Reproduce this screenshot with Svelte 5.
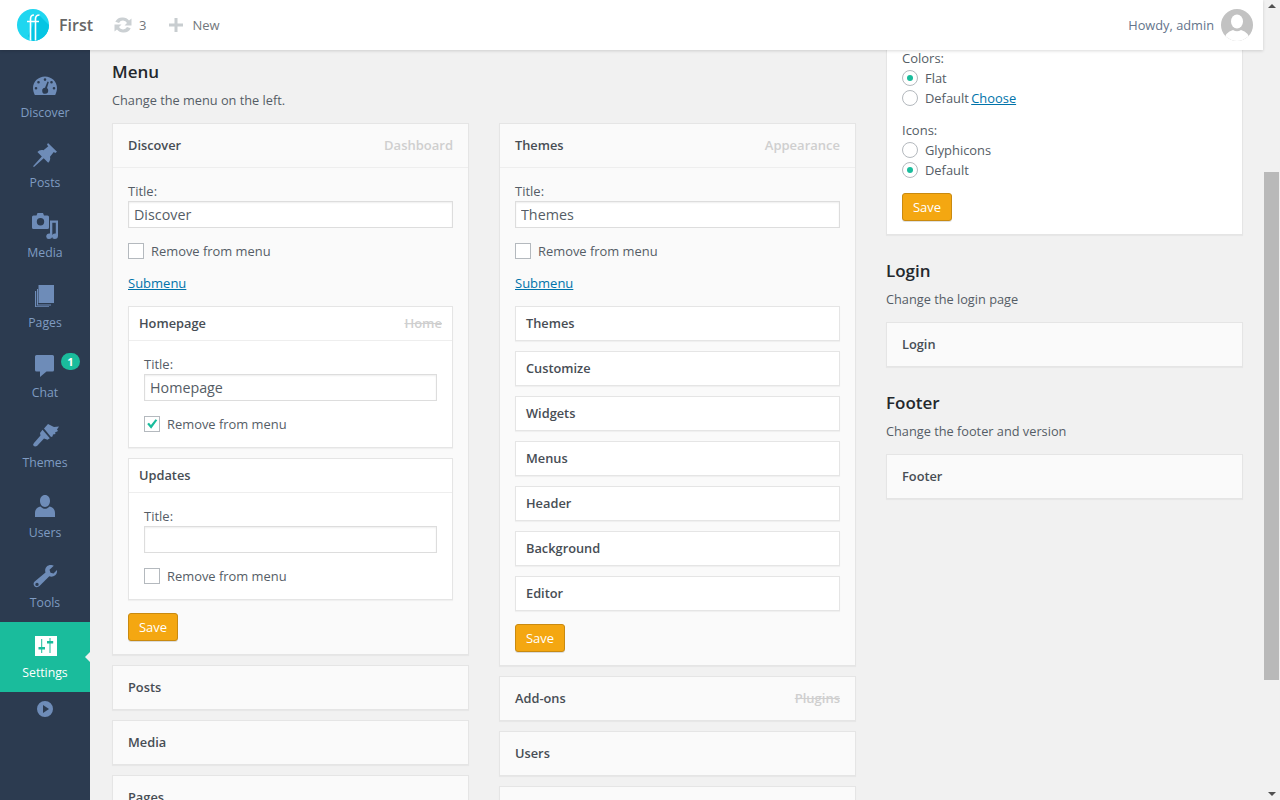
<script lang="ts">
  const nav = [
    { label: 'Discover', icon: 'gauge' },
    { label: 'Posts', icon: 'pin' },
    { label: 'Media', icon: 'media' },
    { label: 'Pages', icon: 'pages' },
    { label: 'Chat', icon: 'chat', badge: 1 },
    { label: 'Themes', icon: 'brush' },
    { label: 'Users', icon: 'user' },
    { label: 'Tools', icon: 'wrench' },
    { label: 'Settings', icon: 'sliders', active: true }
  ];

  const subThemes = ['Themes', 'Customize', 'Widgets', 'Menus', 'Header', 'Background', 'Editor'];
</script>

<div class="page">
  <header class="topbar">
    <svg class="logo" viewBox="0 0 32 32">
      <circle cx="16" cy="16" r="16" fill="#1fd6f0" />
      <path d="M21 5 L32 16 A16 16 0 0 1 16 32 L11 27 Z" fill="#06c5e3" />
      <path d="M13.500 31.500 V10 Q13.500 6 17 6 M18.500 31.500 V10 Q18.500 6 22.500 6 M10 12.500 H22" fill="none" stroke="#fff" stroke-width="1.600" />
    </svg>
    <span class="site">First</span>
    <svg class="tb-icon sync" viewBox="0 0 20 20">
      <path d="M10 2.500 a7.500 7.500 0 0 1 6 3 L18.500 3.500 V10.500 h-7 l2.500-2.400 a4.500 4.500 0 0 0-8-.2 L2.300 6.800 a7.800 7.800 0 0 1 7.700-4.300 Z M10 17.500 a7.500 7.500 0 0 1-6-3 L1.500 16.500 V9.500 h7 l-2.500 2.400 a4.500 4.500 0 0 0 8 .2 L17.700 13.200 a7.800 7.800 0 0 1-7.700 4.300 Z" fill="#cbd0d3" />
    </svg>
    <span class="tb-text count">3</span>
    <svg class="tb-icon plus" viewBox="0 0 14 14"><path d="M5.500 0 h3 v5.500 H14 v3 H8.500 V14 h-3 V8.500 H0 v-3 h5.500 Z" fill="#c8cdd0" /></svg>
    <span class="tb-text">New</span>
    <span class="howdy">Howdy, admin</span>
    <svg class="avatar" viewBox="0 0 32 32">
      <defs><clipPath id="av"><circle cx="16" cy="16" r="16" /></clipPath></defs>
      <circle cx="16" cy="16" r="16" fill="#c2c2c2" />
      <g clip-path="url(#av)" fill="#fff">
        <ellipse cx="16" cy="12.500" rx="6" ry="7" />
        <path d="M3 32 Q4 23 12 21 Q16 23.500 20 21 Q28 23 29 32 Z" />
      </g>
    </svg>
  </header>

  <div class="body">
    <nav class="sidebar">
      {#each nav as item}
        <a class="nav-item" class:active={item.active} href="#top">
          <svg class="nav-icon" viewBox="0 0 24 24">
            {#if item.icon === 'gauge'}
              <path fill-rule="evenodd" d="M12 3.500 C5.500 3.500 0 8.500 0 15 C0 17.500 .7 19.800 1.800 22 H22.200 C23.300 19.800 24 17.500 24 15 C24 8.500 18.500 3.500 12 3.500 Z M12 5.300 a1.300 1.300 0 1 1 0 2.600 a1.300 1.300 0 0 1 0-2.600 Z M5.500 8 a1.300 1.300 0 1 1 0 2.600 a1.300 1.300 0 0 1 0-2.600 Z M18.500 8 a1.300 1.300 0 1 1 0 2.600 a1.300 1.300 0 0 1 0-2.600 Z M3 14 a1.300 1.300 0 1 1 0 2.600 a1.300 1.300 0 0 1 0-2.600 Z M21 14 a1.300 1.300 0 1 1 0 2.600 a1.300 1.300 0 0 1 0-2.600 Z M14.500 8.500 L15.800 9 L14 15 A3 3 0 0 1 15.200 17.800 A3 3 0 1 1 12 14.800 Z" />
            {:else if item.icon === 'pin'}
              <path d="M15 0 L24 8.800 L22.200 10 L20.800 9 L17 13.800 C17.600 16.300 17 18 15.200 19.800 L10.700 15.300 L1 24 L0 23.300 L8.800 13.400 L4.400 8.900 C6 7.300 8 6.400 10.500 7.200 L15.300 3.200 L14 1.800 Z" />
            {:else if item.icon === 'media'}
              <path fill-rule="evenodd" d="M4.500 0 H10 L11 2.500 H14.500 A1.500 1.500 0 0 1 16 4 V14.500 A1.500 1.500 0 0 1 14.500 16 H.5 A1.500 1.500 0 0 1 -1 14.500 V4 A1.500 1.500 0 0 1 .5 2.500 H3.500 Z M7.500 5 a3.700 3.700 0 1 0 0 7.400 a3.700 3.700 0 0 0 0-7.400 Z" />
              <path d="M17 7.500 H25 V22.800 a3.300 3.300 0 0 1-3.300 3.200 A2.700 2.700 0 0 1 19 23.500 A3.200 3.200 0 0 1 22.300 20.500 L22.800 20.600 V9.800 H19.300 V22.800 A3.300 3.300 0 0 1 16 26 A2.700 2.700 0 0 1 13.200 23.500 A3.200 3.200 0 0 1 16.500 20.500 L17 20.600 Z" />
            {:else if item.icon === 'pages'}
              <path d="M5.500 2 H21 V20 H5.500 Z" />
              <path d="M4 6 V22.500 H18 V21.500 H5 V6 Z M2 8 V24 H16 V23.300 H3.200 V8 Z" />
            {:else if item.icon === 'chat'}
              <path d="M3.500 2 H19.500 A1.500 1.500 0 0 1 21 3.500 V17 A1.500 1.500 0 0 1 19.500 18.500 H13.500 L7 24 V18.500 H3.500 A1.500 1.500 0 0 1 2 17 V3.500 A1.500 1.500 0 0 1 3.500 2 Z" />
            {:else if item.icon === 'brush'}
              <path d="M11 5.500 L15 1 L21 4 L26 3.500 L24 6.500 L25 8 L22 9.500 L22.500 11 L20 11.500 L19.500 13.500 L18 14 Z M9.500 6.800 L16.800 15.200 L14.500 16.800 L11 15.500 L4 23 Q2 24 .5 22.800 Q-.5 21.500 1 20 L7.500 12.500 L7 10 Z" />
            {:else if item.icon === 'user'}
              <path d="M12 2 C15 2 17 4.500 17 8 C17 11 15 14 12 14 C9 14 7 11 7 8 C7 4.500 9 2 12 2 Z M7.500 13.500 C9 15 10.500 15.800 12 15.800 C13.500 15.800 15 15 16.500 13.500 C20 14.500 22 16.500 22 20 V24 H2 V20 C2 16.500 4 14.500 7.500 13.500 Z" />
            {:else if item.icon === 'wrench'}
              <path fill-rule="evenodd" d="M17.500 2 C19 2 20 2.300 20.800 2.800 L16.500 6.700 L17.500 9.700 L20.500 10.500 L24 7 C24.300 9 23.700 11 22.200 12.300 C20.500 13.700 18.300 14 16.300 13.300 L6.500 23 C5 24.500 2.800 24.500 1.500 23.200 C.2 21.800 .3 19.800 1.700 18.500 L12.500 9.500 C11.700 7.500 12.200 5 13.800 3.500 C14.800 2.500 16.200 2 17.500 2 Z M4 19.700 a1.700 1.700 0 1 0 0 3.400 a1.700 1.700 0 0 0 0-3.400 Z" />
            {:else if item.icon === 'sliders'}
              <path fill="#fff" d="M2 3 H24 V23 H2 Z" />
              <path fill="#1abc9c" d="M8.200 6 H9.200 V14 H12 V16.500 H9.200 V20 H8.200 V16.500 H5.500 V14 H8.200 Z M16.500 5 H17.500 V8 H20.200 V10.500 H17.500 V20 H16.500 V10.500 H14 V8 H16.500 Z" />
            {/if}
          </svg>
          <span class="nav-label">{item.label}</span>
          {#if item.badge}<span class="badge">{item.badge}</span>{/if}
        </a>
      {/each}
      <svg class="collapse" viewBox="0 0 16 16">
        <path fill-rule="evenodd" d="M8 0 a8 8 0 1 1 0 16 a8 8 0 0 1 0-16 Z M6 4 V12 L12 8 Z" />
      </svg>
    </nav>

    <main class="main" id="top">
      <div class="col-wide">
        <h2>Menu</h2>
        <p class="desc">Change the menu on the left.</p>
        <div class="two-cols">
          <div class="stack">
            <section class="card">
              <div class="card-head"><b>Discover</b><span class="wp-name">Dashboard</span></div>
              <div class="card-body">
                <label class="title">Title:<input type="text" value="Discover" /></label>
                <div class="check"><span class="box"></span>Remove from menu</div>
                <a class="link sub-link" href="#top">Submenu</a>
                <section class="sub">
                  <div class="sub-head"><b>Homepage</b><s class="wp-name">Home</s></div>
                  <div class="sub-body">
                    <label class="title">Title:<input type="text" value="Homepage" /></label>
                    <div class="check">
                      <span class="box">
                        <svg viewBox="0 0 16 16"><path d="M2.500 8 L4.500 6.500 L6.800 9.200 L12 2.500 L14 3.800 L7 13.500 Z" fill="#1abc9c" /></svg>
                      </span>
                      Remove from menu
                    </div>
                  </div>
                </section>
                <section class="sub">
                  <div class="sub-head"><b>Updates</b></div>
                  <div class="sub-body">
                    <label class="title">Title:<input type="text" value="" /></label>
                    <div class="check"><span class="box"></span>Remove from menu</div>
                  </div>
                </section>
                <button class="save">Save</button>
              </div>
            </section>
            <section class="card closed"><div class="card-head"><b>Posts</b></div></section>
            <section class="card closed"><div class="card-head"><b>Media</b></div></section>
            <section class="card closed"><div class="card-head"><b>Pages</b></div></section>
          </div>

          <div class="stack">
            <section class="card">
              <div class="card-head"><b>Themes</b><span class="wp-name">Appearance</span></div>
              <div class="card-body">
                <label class="title">Title:<input type="text" value="Themes" /></label>
                <div class="check"><span class="box"></span>Remove from menu</div>
                <a class="link sub-link" href="#top">Submenu</a>
                {#each subThemes as name}
                  <section class="sub"><div class="sub-head flat"><b>{name}</b></div></section>
                {/each}
                <button class="save">Save</button>
              </div>
            </section>
            <section class="card closed"><div class="card-head"><b>Add-ons</b><s class="wp-name">Plugins</s></div></section>
            <section class="card closed"><div class="card-head"><b>Users</b></div></section>
            <section class="card closed"><div class="card-head"><b>Tools</b></div></section>
          </div>
        </div>
      </div>

      <div class="col-side">
        <section class="card white">
          <div class="options">
            <div class="opt-label">Colors:</div>
            <div class="radio"><span class="dot on"></span>Flat</div>
            <div class="radio"><span class="dot"></span>Default&nbsp;<a class="link" href="#top">Choose</a></div>
            <div class="opt-label second">Icons:</div>
            <div class="radio"><span class="dot"></span>Glyphicons</div>
            <div class="radio"><span class="dot on"></span>Default</div>
            <button class="save">Save</button>
          </div>
        </section>

        <h2 class="side-head">Login</h2>
        <p class="desc">Change the login page</p>
        <section class="card closed"><div class="card-head"><b>Login</b></div></section>

        <h2 class="side-head">Footer</h2>
        <p class="desc">Change the footer and version</p>
        <section class="card closed"><div class="card-head"><b>Footer</b></div></section>
      </div>
    </main>
  </div>

  <div class="scrollbar" aria-hidden="true">
    <span class="arrow up"></span>
    <span class="thumb"></span>
    <span class="arrow down"></span>
  </div>
</div>

<style>
  :global(body) {
    background: #f1f1f1;
    font-family: "Open Sans", "Noto Sans", sans-serif;
    font-size: 13px;
    color: #444;
  }

  .page {
    position: relative;
    height: 800px;
    overflow: hidden;
    padding-right: 17px;
    box-sizing: border-box;
  }

  .topbar {
    position: relative;
    z-index: 2;
    height: 50px;
    background: #fff;
    box-shadow: 0 1px 3px rgba(0, 0, 0, 0.15);
    display: flex;
    align-items: center;
    padding: 0 10px 0 17px;
  }

  .logo { width: 32px; height: 32px; }

  .site {
    margin-left: 10px;
    font-size: 16px;
    font-weight: 600;
    color: #666;
  }

  .tb-icon { flex: none; }
  .sync { width: 20px; height: 20px; margin-left: 20px; }
  .plus { width: 14px; height: 14px; margin-left: 23px; margin-right: 9px; }
  .count { margin-left: 6px; }
  .tb-text { color: #72777c; }

  .howdy { margin-left: auto; color: #64748b; font-size: 12.800px; }
  .avatar { width: 32px; height: 32px; margin-left: 7px; }

  .body { display: flex; height: 750px; }

  .sidebar {
    flex: none;
    width: 90px;
    background: #2c3b50;
    padding-top: 12px;
    box-sizing: border-box;
  }

  .nav-item {
    position: relative;
    display: flex;
    flex-direction: column;
    align-items: center;
    height: 70px;
    padding-top: 11px;
    box-sizing: border-box;
    color: #7f9bc2;
    text-decoration: none;
  }

  .nav-icon { width: 24px; height: 24px; fill: #6e8cb8; overflow: visible; }
  .nav-label { margin-top: 7px; line-height: 18px; font-size: 12.250px; }

  .nav-item.active { background: #1abc9c; color: #fff; }
  .nav-item.active::after {
    content: "";
    position: absolute;
    right: 0;
    top: 30px;
    border: 5px solid transparent;
    border-right-color: #f1f1f1;
    border-left-width: 0;
  }

  .badge {
    position: absolute;
    top: 11px;
    left: 61px;
    width: 19px;
    height: 17px;
    border-radius: 9px;
    background: #1abc9c;
    color: #fff;
    font-size: 11px;
    font-weight: 700;
    line-height: 17px;
    text-align: center;
  }

  .collapse { display: block; width: 16px; height: 16px; margin: 9px auto 0; fill: #6e8cb8; }

  .main {
    flex: 1;
    display: flex;
    gap: 30px;
    padding: 0 20px 0 22px;
    min-width: 0;
    overflow: hidden;
  }

  .col-wide { flex: none; width: 744px; padding-top: 10px; }
  .col-side { flex: none; width: 357px; margin-top: -1px; }

  h2 {
    margin: 0;
    font-size: 17px;
    font-weight: 600;
    line-height: 24px;
    color: #23282d;
  }

  .desc { margin: 6px 0 0; line-height: 20px; font-size: 12.750px; color: #555d66; }
  .two-cols { display: flex; gap: 30px; margin-top: 13px; }
  .stack { width: 357px; display: flex; flex-direction: column; gap: 10px; }

  .card {
    background: #fafafa;
    border: 1px solid #e5e5e5;
    box-shadow: 0 1px 1px rgba(0, 0, 0, 0.04);
  }

  .card.white { background: #fff; border-top: 0; }

  .card-head {
    display: flex;
    justify-content: space-between;
    align-items: center;
    height: 44px;
    padding: 0 15px 1px;
    box-sizing: border-box;
    border-bottom: 1px solid #eee;
  }

  .closed .card-head { height: 43px; padding-bottom: 2px; border-bottom: 0; }

  b { font-weight: 550; font-size: 12.800px; color: #474d54; }

  .wp-name { font-weight: 600; color: #cfcfcf; }

  .card-body { padding: 14px 15px 13px; }

  .title { display: block; line-height: 18px; color: #555d66; }

  input {
    display: block;
    width: 100%;
    height: 27px;
    margin-top: 1px;
    padding: 0 5px;
    box-sizing: border-box;
    border: 1px solid #ddd;
    background: #fff;
    box-shadow: inset 0 1px 2px rgba(0, 0, 0, 0.07);
    font: 14.300px "Open Sans", sans-serif;
    color: #555d66;
    outline: none;
  }

  .check {
    display: flex;
    align-items: center;
    gap: 7px;
    height: 16px;
    margin-top: 15px;
    font-size: 12.900px;
    color: #555d66;
  }

  .box {
    flex: none;
    width: 16px;
    height: 16px;
    box-sizing: border-box;
    border: 1px solid #b4b9be;
    background: #fff;
  }

  .box svg { display: block; width: 14px; height: 14px; }

  .link { color: #0073aa; }

  .sub-link { display: block; width: fit-content; margin: 15px 0 14px; line-height: 18px; }

  .sub {
    background: #fff;
    border: 1px solid #e5e5e5;
    box-shadow: 0 1px 1px rgba(0, 0, 0, 0.04);
    margin-bottom: 10px;
  }

  .sub-head {
    display: flex;
    justify-content: space-between;
    align-items: center;
    height: 34px;
    padding: 0 10px 1px;
    box-sizing: border-box;
    border-bottom: 1px solid #eee;
  }

  .sub-head.flat { height: 33px; border-bottom: 0; }

  .sub-body { padding: 14px 15px 15px; }

  .save {
    display: block;
    width: 50px;
    height: 28px;
    margin-top: 13px;
    padding: 0;
    border: 1px solid #c98a10;
    border-radius: 3px;
    background: #f4a711;
    box-shadow: 0 1px 0 rgba(0, 0, 0, 0.12);
    color: #fff;
    font: 13px "Open Sans", sans-serif;
  }

  .options { padding: 0 15px 13px; }
  .opt-label { line-height: 18px; color: #555d66; }
  .opt-label.second { margin-top: 13px; }

  .radio {
    display: flex;
    align-items: center;
    height: 20px;
    font-size: 12.900px;
    color: #555d66;
  }

  .radio .link { margin-left: -1px; }
  .radio:nth-child(2) { margin-top: 1px; }
  .opt-label.second + .radio { margin-top: 1px; }

  .dot {
    flex: none;
    position: relative;
    width: 16px;
    height: 16px;
    margin-right: 7px;
    box-sizing: border-box;
    border: 1px solid #b4b9be;
    border-radius: 50%;
    background: #fff;
  }

  .dot.on::after {
    content: "";
    position: absolute;
    left: 4px;
    top: 4px;
    width: 6px;
    height: 6px;
    border-radius: 50%;
    background: #1abc9c;
  }

  .options .save { margin-top: 13px; }

  .side-head { margin-top: 24px; }

  .col-side .card.closed { margin-top: 13px; }

  .scrollbar {
    position: absolute;
    top: 0;
    right: 0;
    bottom: 0;
    width: 17px;
    background: #f1f1f1;
  }

  .thumb {
    position: absolute;
    left: 1px;
    right: 1px;
    top: 172px;
    height: 508px;
    background: #b9b9b9;
  }

  .arrow {
    position: absolute;
    left: 5px;
    border: 4px solid transparent;
  }

  .arrow.up { top: 4px; border-top-width: 0; border-bottom-color: #505050; }
  .arrow.down { bottom: 4px; border-bottom-width: 0; border-top-color: #505050; }
</style>
